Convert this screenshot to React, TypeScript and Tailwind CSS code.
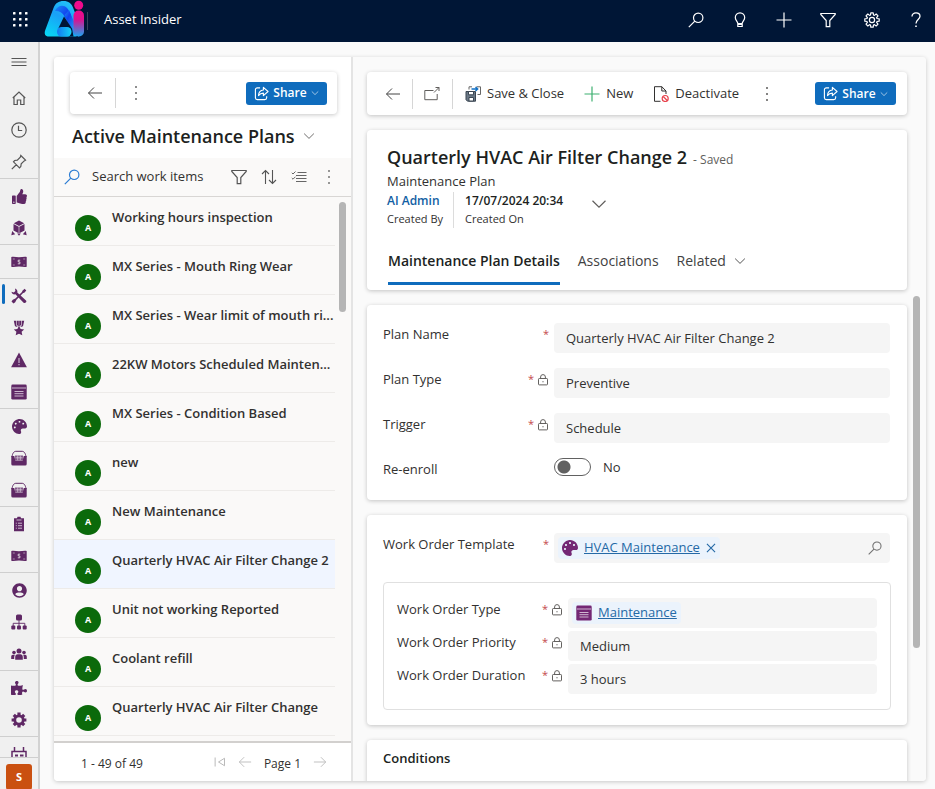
import { useState } from 'react';
import type { ReactNode } from 'react';
import { FaPuzzlePiece, FaThumbsUp, FaUserCircle, FaPalette } from 'react-icons/fa';

interface IconProps {
  className?: string;
}

// thin outline icons, 16px grid
function Outline({ className = 'size-4', children }: IconProps & { children: ReactNode }) {
  return (
    <svg viewBox="0 0 16 16" className={className} fill="none" stroke="currentColor" aria-hidden="true">
      {children}
    </svg>
  );
}

function Solid({ className = 'size-4', children }: IconProps & { children: ReactNode }) {
  return (
    <svg viewBox="0 0 16 16" className={className} fill="currentColor" aria-hidden="true">
      {children}
    </svg>
  );
}

const MenuIcon = () => (
  <Outline><path d="M.5 4.500h15M.5 8h15M.5 11.500h15" /></Outline>
);
const HomeIcon = () => (
  <Outline><path d="M1.800 8 8 2l6.200 6M3 7v7.500h3.300V10h3.400v4.500H13V7" strokeWidth="1.200" /></Outline>
);
const ClockIcon = () => (
  <Outline><circle cx="8" cy="8" r="7.200" strokeWidth="1.200" /><path d="M7.500 3.800v4.700h3.700" strokeWidth="1.200" /></Outline>
);
const PinIcon = () => (
  <Outline><path d="m9.800 1.500 4.700 4.700-1.300.7-3 3-.4 2.600-1.300 1.300-6-6L3.700 6.500l2.600-.4 3-3zM5.500 10.500l-4.700 4.700" strokeWidth="1.200" /></Outline>
);
const SearchIcon = ({ className }: IconProps) => (
  <Outline className={className}><circle cx="10.200" cy="5.800" r="4.700" strokeWidth="1.200" /><path d="m6.800 9.200-6 6" strokeWidth="1.200" /></Outline>
);
const BulbIcon = () => (
  <Outline><path d="M5.800 11.500c0-2-2.500-3-2.500-6a4.700 4.700 0 0 1 9.400 0c0 3-2.500 4-2.500 6zM5.800 11.500v3h4.400v-3M5.800 12.500h4.400" strokeWidth="1.200" /></Outline>
);
const PlusIcon = () => (
  <Outline><path d="M8 .5v15M.5 8h15" strokeWidth="1.200" /></Outline>
);
const FilterIcon = ({ className }: IconProps) => (
  <Outline className={className}><path d="M.8 1.500h14.400v1L9.800 8.600v6H6.200v-6L.8 2.500z" strokeWidth="1.200" /></Outline>
);
const GearIcon = () => (
  <Outline>
    <circle cx="8" cy="8" r="2.600" strokeWidth="1.200" />
    <path
      d="m6.500 3 .3-2.200h2.400L9.500 3l.9.400 1.800-1.400L14 3.800l-1.400 1.800.4.900 2.200.3v2.400l-2.200.3-.4.900 1.400 1.800-1.800 1.800-1.800-1.400-.9.400-.3 2.200H6.800L6.500 13l-.9-.4L3.800 14 2 12.200l1.400-1.800-.4-.9-2.200-.3V6.800L3 6.500l.4-.9L2 3.800 3.800 2l1.800 1.400z"
      strokeWidth="1.200"
      strokeLinejoin="round"
    />
  </Outline>
);
const HelpIcon = () => (
  <Outline><path d="M4 4.500C4 2.300 5.600.9 8 .9s4 1.300 4 3.300c0 3.300-4 3.300-4 7.300" strokeWidth="1.300" /><path d="M8 13.500V15" strokeWidth="1.600" /></Outline>
);
const BackIcon = ({ className }: IconProps) => (
  <Outline className={className}><path d="M15 8H1.500M7 2.500 1.500 8 7 13.500" /></Outline>
);
const ForwardIcon = ({ className }: IconProps) => (
  <Outline className={className}><path d="M1 8h13.500M9 2.500 14.500 8 9 13.500" /></Outline>
);
const MoreIcon = () => (
  <Solid><path d="M7.200 1.200h1.600v1.600H7.200zM7.200 7.200h1.600v1.600H7.200zM7.200 13.200h1.600v1.600H7.200z" /></Solid>
);
const ChevronIcon = ({ className }: IconProps) => (
  <Outline className={className}><path d="m1.500 4.800 6.500 6.400 6.500-6.400" strokeWidth="1.200" /></Outline>
);
const ShareIcon = () => (
  <Outline className="size-[15px]">
    <path d="M6.500 2H3.500A2 2 0 0 0 1.500 4v8.500a2 2 0 0 0 2 2h8a2 2 0 0 0 2-2V11" strokeWidth="1.200" />
    <path d="M10 1.500v2.700C6.500 4.500 5 6.800 4.800 10.200 6.200 8.300 7.800 7.600 10 7.600v2.700l5-4.400z" strokeWidth="1.200" strokeLinejoin="round" />
  </Outline>
);
const SortIcon = () => (
  <Outline><path d="M4.500 15V1.500M1 5l3.500-3.500L8 5M11.500 1v13.500M8 11l3.500 3.500L15 11" strokeWidth="1.100" /></Outline>
);
const ChecklistIcon = () => (
  <Outline><path d="M6.500 3.500h9M5 6.500h10.500M5 9.500h10.500M5 12.500h10.500M.8 3.800l1.200 1.200L4.500 2.500M.8 9l1.200 1.200 2.500-2.500" strokeWidth=".9" /></Outline>
);
const PopOutIcon = () => (
  <Outline><path d="M9.500 4.500H.8v9.200h12.400V8M10 6.500l5-5M11.500 1.500h3.500V5" strokeWidth="1" /></Outline>
);
const SaveCloseIcon = () => (
  <Outline>
    <path d="M1 5.500h9.500v9.700H2.500L1 13.700z" fill="#6b7886" stroke="#3b4652" />
    <path d="M3.500 5.500h5v3.300h-5zM4 11.500h4.500v3.500H4z" fill="#fff" stroke="#3b4652" />
    <path d="M4 3.500V.8h3M11.500.8h4v7.700h-3" stroke="#666" />
    <path d="M6.500 3h6M10.500 1l2.200 2-2.200 2" stroke="#1270c4" strokeWidth="1.400" />
  </Outline>
);
const DeactivateIcon = () => (
  <Outline>
    <path d="M7.500 15.300H1.500V.7h7.300L13 5v3M8.800.7V5H13" />
    <g stroke="#e8434d" strokeWidth="1.200">
      <circle cx="12.200" cy="12.500" r="3" />
      <path d="m10.200 10.500 4 4" />
    </g>
  </Outline>
);
const LockIcon = () => (
  <Outline className="size-3 text-[#605e5c]">
    <rect x="2" y="6" width="12" height="8.500" rx="1" strokeWidth="1.300" />
    <path d="M4.800 6V4a3.200 3.200 0 0 1 6.400 0v2" strokeWidth="1.300" />
    <path d="M7.200 9.500h1.600v1.600H7.200z" fill="currentColor" stroke="none" />
  </Outline>
);
const FirstPageIcon = () => (
  <Outline className="size-3"><path d="M1.500 2v12M14 3v10L6 8z" strokeWidth="1.300" /></Outline>
);
const CloseIcon = () => (
  <Outline className="size-2.5"><path d="m1.500 1.500 13 13M14.500 1.500l-13 13" strokeWidth="1.800" /></Outline>
);

// entity icons of the site map
const CubeIcon = () => (
  <Solid>
    <path d="M8 .6 13.200 3.200 8 5.900 2.800 3.200zM2.500 4l5.200 2.700v6.500L2.500 10.500zM13.500 4 8.300 6.700v6.500l5.200-2.700z" />
    <path d="M.3 15.200 1.200 11l3 3.200zM15.700 15.200 14.800 11l-3 3.200zM6.200 13.500h3.600L8 15.700z" />
  </Solid>
);
const MoneyIcon = () => (
  <Solid>
    <path d="M.3 3c2.500-.8 5 .3 7.700.3s5.200-.8 7.700-.3v9.800c-2.500.6-5-.4-7.700-.4s-5.200 1-7.700.3z" />
    <g fill="none" stroke="#f0f0f0">
      <path d="M9.200 6.200H7.200v1.700h1.700v1.900H6.800" strokeWidth=".8" />
      <path d="M1.800 5h2M12.200 5h2M1.800 11h2M12.200 11h2" strokeWidth=".5" />
    </g>
  </Solid>
);
const ToolsIcon = () => (
  <Solid>
    <path d="M13.600.8 15.300 2.500l-2 2.200-1.200.3L5.500 11.700l-1.300 2.600L2.500 15.500.5 13.500l1.300-1.700 2.600-1.300L11 3.900l.4-1.200z" />
    <path d="M4 .4c1.800.5 2.700 2.200 2.300 4l8.700 8c1.300 1.400-1 3.500-2.400 2.300L4.400 6.300C2.500 6.800.8 5.800.4 3.800l2.400.7 1.600-1.600z" />
  </Solid>
);
const MedalIcon = () => (
  <Solid>
    <path d="M2.800.8h2.500v4.500l1.500 1.700L4 6.300zM5.900.8h1.900v5.700L5.900 5zM8.200.8h1.900V5L8.200 6.500zM10.700.8h2.500L12 6.300l-2.800.7 1.500-1.700z" />
    <path d="m8 5.800 1.600 3.200 3.600.4-2.600 2.300.7 3.600L8 13.700l-3.300 1.600.7-3.600-2.600-2.300 3.600-.4z" />
  </Solid>
);
const WarningIcon = () => (
  <Solid><path d="M8 .6 15.900 15.200H.1z" /><path d="M8 6v5M8 12v1.300" stroke="#c9b6cc" strokeWidth="1.200" /></Solid>
);
const FormIcon = ({ className }: IconProps) => (
  <Solid className={className}>
    <rect x=".3" y=".6" width="15.400" height="15" rx="1.300" />
    <path d="M1 4h14M3.500 7.500h9M3.500 9.700h9M3.500 12h9" stroke="#e6dae8" strokeWidth=".8" />
  </Solid>
);
const BasketIcon = () => (
  <Solid>
    <path d="M1 7C1.500 3 3 1.300 5 1.300h6c2 0 3.500 1.700 4 5.700" fill="none" stroke="currentColor" />
    <path d="M.3 6h3l1 4.500h7.400l1-4.500h3v8a1.500 1.500 0 0 1-1.500 1.500H1.800A1.500 1.500 0 0 1 .3 14z" />
    <path d="M4 5.500h8v4.700H4z" opacity=".75" />
    <path d="M4.500 7.800h7M6.700 5.500v4.700M9.300 5.500v4.700" stroke="#e6dae8" strokeWidth=".6" />
  </Solid>
);
const ClipboardIcon = () => (
  <Solid>
    <path d="M3 2.200h3L6.500.8h3l.5 1.400h3v13H3z" />
    <path d="M5.500 4h5M4.800 7.200h1M7 7.200h4M4.800 9.700h1M7 9.700h4M4.800 12.200h1M7 12.200h4" stroke="#e6dae8" strokeWidth=".8" />
  </Solid>
);
const HierarchyIcon = () => (
  <Solid>
    <rect x="5" y=".5" width="6" height="6" rx="1.500" />
    <path d="M8 6v6M2.200 12V9.300h11.600V12" fill="none" stroke="currentColor" strokeWidth=".9" />
    <rect x=".3" y="11.500" width="4" height="4" rx="1" />
    <rect x="6" y="11.500" width="4" height="4" rx="1" />
    <rect x="11.700" y="11.500" width="4" height="4" rx="1" />
  </Solid>
);
const TeamIcon = () => (
  <Solid>
    <circle cx="8" cy="5" r="2.500" />
    <circle cx="3" cy="6.500" r="1.800" />
    <circle cx="13" cy="6.500" r="1.800" />
    <path d="M4.200 13.700V11c0-1.800 1-2.800 2.500-2.800h2.600c1.500 0 2.500 1 2.500 2.800v2.700zM.2 12.900v-2.200c0-1.200.7-2 1.800-2h2c-.8.900-.8 2.500-.8 4.200zM15.800 12.900v-2.200c0-1.200-.7-2-1.800-2h-2c.8.900.8 2.500.8 4.200z" />
  </Solid>
);
const SolidGearIcon = () => (
  <Outline>
    <circle cx="8" cy="8" r="4.200" strokeWidth="2.800" />
    <path d="M8 .6v3M8 12.400v3M.6 8h3M12.400 8h3M2.800 2.800l2 2M11.200 11.200l2 2M13.200 2.800l-2 2M4.800 11.200l-2 2" strokeWidth="3.200" />
  </Outline>
);
const RobotIcon = () => (
  <Outline>
    <path d="M3.500 1v4M12.500 1v4M1 15.500V5.500h14v10" strokeWidth="1.500" />
    <path d="M4 9.500h3M9 9.500h3.500M4 12.500h8" strokeWidth="2" />
  </Outline>
);

function Logo() {
  return (
    <svg viewBox="0 0 42 38" className="h-[38px] w-[42px]" aria-label="Asset Insider logo" role="img">
      <defs>
        <linearGradient id="leg" x1="0" y1="1" x2=".6" y2="0">
          <stop offset="0" stopColor="#06dcf5" />
          <stop offset=".6" stopColor="#1aa0f7" />
          <stop offset="1" stopColor="#22c3f7" />
        </linearGradient>
        <linearGradient id="arm" x1="0" y1="0" x2=".8" y2="1">
          <stop offset="0" stopColor="#1b8bf5" />
          <stop offset=".4" stopColor="#1040ee" />
          <stop offset="1" stopColor="#2098f5" />
        </linearGradient>
        <linearGradient id="foot" x1="0" y1="0" x2="1" y2="0">
          <stop offset="0" stopColor="#1478f2" />
          <stop offset="1" stopColor="#12d2f5" />
        </linearGradient>
        <linearGradient id="stem" x1="0" y1="0" x2="0" y2="1">
          <stop offset="0" stopColor="#ee0a8c" />
          <stop offset=".35" stopColor="#d9128f" />
          <stop offset="1" stopColor="#1ba4f2" />
        </linearGradient>
      </defs>
      <path d="M5 36.500c-4 0-5-3-3.800-6.300L9.500 8C11.500 3 14.500 1 19.500 1c5 0 8 2.500 9.500 6.500L39 33l-7 3.500z" fill="url(#leg)" />
      <path d="M11 11c2-5 8-7 12-3 2 2 3 5 4 8l8 20.500-5-2L20 15.500c-1.500-3-5.500-5-9-4.500z" fill="url(#arm)" />
      <path d="M20 16.500 28 28.500l1.500 8H25l-10.500-8.500z" fill="#001636" />
      <path d="M20.500 15 30 31.500V22L25 10z" fill="url(#arm)" />
      <rect x="13" y="27" width="14.500" height="9.500" rx="4.500" fill="url(#foot)" />
      <rect x="29.500" y="10.500" width="10.500" height="26" rx="5" fill="url(#stem)" />
      <circle cx="34.700" cy="5.300" r="4.500" fill="#ee0a8c" />
    </svg>
  );
}

const navGroups: { label: string; icon: ReactNode; active?: boolean }[][] = [
  [
    { label: 'Approvals', icon: <FaThumbsUp size={15} /> },
    { label: 'Assets', icon: <CubeIcon /> },
  ],
  [{ label: 'Costs', icon: <MoneyIcon /> }],
  [
    { label: 'Maintenance Plans', icon: <ToolsIcon />, active: true },
    { label: 'Awards', icon: <MedalIcon /> },
    { label: 'Alerts', icon: <WarningIcon /> },
    { label: 'Work Order Types', icon: <FormIcon /> },
  ],
  [
    { label: 'Templates', icon: <FaPalette size={15} /> },
    { label: 'Inventory', icon: <BasketIcon /> },
    { label: 'Purchases', icon: <BasketIcon /> },
  ],
  [
    { label: 'Inspections', icon: <ClipboardIcon /> },
    { label: 'Budgets', icon: <MoneyIcon /> },
  ],
  [
    { label: 'Accounts', icon: <FaUserCircle size={15} /> },
    { label: 'Hierarchy', icon: <HierarchyIcon /> },
    { label: 'Teams', icon: <TeamIcon /> },
  ],
  [
    { label: 'Extensions', icon: <FaPuzzlePiece size={16} /> },
    { label: 'Settings', icon: <SolidGearIcon /> },
  ],
  [{ label: 'Assistant', icon: <RobotIcon /> }],
];

const plans = [
  'Working hours inspection',
  'MX Series - Mouth Ring Wear',
  'MX Series - Wear limit of mouth ri...',
  '22KW Motors Scheduled Mainten...',
  'MX Series - Condition Based',
  'new',
  'New Maintenance',
  'Quarterly HVAC Air Filter Change 2',
  'Unit not working Reported',
  'Coolant refill',
  'Quarterly HVAC Air Filter Change',
];

const headerActions = [
  { label: 'Search', icon: <SearchIcon /> },
  { label: 'Ideas', icon: <BulbIcon /> },
  { label: 'New', icon: <PlusIcon /> },
  { label: 'Filter', icon: <FilterIcon /> },
  { label: 'Settings', icon: <GearIcon /> },
  { label: 'Help', icon: <HelpIcon /> },
];

function ShareButton() {
  return (
    <button className="ml-auto flex h-[23px] w-[81px] items-center justify-center gap-1 rounded-[3px] bg-[#0f6cbd] text-[12px] font-[560] text-white">
      <ShareIcon />
      Share
      <ChevronIcon className="size-2" />
    </button>
  );
}

function Sidebar() {
  return (
    <nav className="flex w-10 shrink-0 flex-col overflow-hidden border-r-2 border-[#d2d2d2] bg-[#f0f0f0] text-[#555]">
      <button aria-label="Menu" className="flex h-10 shrink-0 items-center justify-center"><MenuIcon /></button>
      <a href="#home" aria-label="Home" className="flex h-8 shrink-0 items-center justify-center"><HomeIcon /></a>
      <a href="#recent" aria-label="Recent" className="flex h-8 shrink-0 items-center justify-center"><ClockIcon /></a>
      <a href="#pinned" aria-label="Pinned" className="flex h-8 shrink-0 items-center justify-center"><PinIcon /></a>
      <div className="min-h-0 flex-1 overflow-hidden text-[#5f2865]">
        {navGroups.map((group, i) => (
          <div key={i} className="border-t border-[#cfcfcf] pt-px">
            {group.map((item) => (
              <a
                key={item.label}
                href="#nav"
                aria-label={item.label}
                className="relative flex h-8 items-center justify-center"
              >
                {item.active && <span className="absolute top-1 left-0.5 h-5 w-[3px] rounded-sm bg-[#0f6cbd]" />}
                {item.icon}
              </a>
            ))}
          </div>
        ))}
      </div>
      <div className="flex h-8 shrink-0 justify-center overflow-hidden border-t border-[#cfcfcf] pt-1.5">
        <button className="size-[26px] shrink-0 rounded-[3px] bg-[#ca5010] text-[11px] font-bold text-white">S</button>
      </div>
    </nav>
  );
}

function PlanList() {
  const [selected, setSelected] = useState(7);

  return (
    <section className="flex w-[299px] shrink-0 flex-col border-r-2 border-[#e4e4e4] bg-white">
      <div className="mt-[15px] mr-3.5 ml-4 flex h-[42px] items-center rounded bg-white pr-2.5 pl-[17px] text-[#444] shadow-[0_1px_4px_rgba(0,0,0,0.22)]">
        <button aria-label="Back"><BackIcon /></button>
        <span className="mx-3 h-[30px] w-px bg-[#d6d6d6]" />
        <button aria-label="More commands"><MoreIcon /></button>
        <ShareButton />
      </div>
      <button className="flex h-11 items-center gap-2 pl-[18px] text-[18px] font-[560] text-[#201f1e]">
        Active Maintenance Plans
        <ChevronIcon className="size-3 text-[#605e5c]" />
      </button>
      <div className="flex h-[39px] items-center border-b border-[#d8d6d4] bg-[#faf9f8] pr-3.5 pl-2.5 text-[#555]">
        <SearchIcon className="size-4 shrink-0 text-[#2b7cd3]" />
        <input
          aria-label="Search work items"
          placeholder="Search work items"
          className="ml-3 min-w-0 flex-1 text-[13px] outline-none placeholder:text-[#323130]"
        />
        <div className="flex items-center gap-3.5">
          <button aria-label="Filter"><FilterIcon /></button>
          <button aria-label="Sort"><SortIcon /></button>
          <button aria-label="Select"><ChecklistIcon /></button>
          <button aria-label="More"><MoreIcon /></button>
        </div>
      </div>
      <div className="flex min-h-0 flex-1 bg-[#faf9f8]">
        <ul className="min-w-0 flex-1 overflow-hidden">
          {plans.map((plan, i) => (
            <li key={plan}>
              <button
                onClick={() => setSelected(i)}
                className={`flex h-[49px] w-full border-b border-[#edebe9] pl-[21px] text-left ${i === selected ? 'bg-[#f0f5ff]' : ''}`}
              >
                <span className="mt-[18px] flex size-[26px] shrink-0 items-center justify-center rounded-full bg-[#0b6a0b] text-[9px] font-bold text-white">
                  A
                </span>
                <span className="mt-2.5 ml-[11px] text-[13px] leading-5 font-[560] whitespace-nowrap text-[#323130]">{plan}</span>
              </button>
            </li>
          ))}
        </ul>
        <div className="w-4 shrink-0 pt-[5px] pl-1">
          <div className="h-[110px] w-[7px] rounded-full bg-[#b5b5b5]" />
        </div>
      </div>
      <div className="flex h-10 items-center border-t-2 border-[#d2d0ce] pt-1 pr-6 pl-[27px] text-[12px] text-[#323130]">
        <span className="flex-1">1 - 49 of 49</span>
        <div className="flex items-center gap-3 text-[#b8b8b8]">
          <button aria-label="First page" className="mb-1"><FirstPageIcon /></button>
          <button aria-label="Previous page" className="mb-1"><BackIcon className="size-3.5" /></button>
          <span className="text-[#323130]">Page 1</span>
          <button aria-label="Next page" className="mb-1"><ForwardIcon className="size-3.5" /></button>
        </div>
      </div>
    </section>
  );
}

interface FieldProps {
  id: string;
  label: string;
  locked?: boolean;
  required?: boolean;
  children: ReactNode;
}

function Field({ id, label, locked, required = true, children }: FieldProps) {
  return (
    <div className="flex">
      <div className="flex h-6 w-[171px] shrink-0 items-center gap-[3px] pr-[5px] text-[13px]">
        <label htmlFor={id} className="flex-1 text-[#323130]">{label}</label>
        {required && <span className="pb-0.5 text-[11px] text-[#c4494c]">*</span>}
        {locked && <LockIcon />}
      </div>
      {children}
    </div>
  );
}

function TextField({ id, label, value, locked }: { id: string; label: string; value: string; locked?: boolean }) {
  return (
    <Field id={id} label={label} locked={locked}>
      <input
        id={id}
        defaultValue={value}
        readOnly={locked}
        className="h-[30px] min-w-0 flex-1 rounded bg-[#f5f5f5] px-3 text-[13px] text-[#323130] outline-none"
      />
    </Field>
  );
}

const card = 'mr-[19px] ml-3.5 shrink-0 rounded bg-white shadow-[0_1px_4px_rgba(0,0,0,0.22)]';

function CommandBar() {
  return (
    <div className={`${card} mt-[15px] flex h-[43px] items-center pr-[11px] pl-[18px] text-[13px] text-[#323130]`}>
      <button aria-label="Back" className="text-[#444]"><BackIcon /></button>
      <span className="mx-[11px] h-[30px] w-px bg-[#d6d6d6]" />
      <button aria-label="Open in new window" className="text-[#605e5c]"><PopOutIcon /></button>
      <span className="mx-3 h-[30px] w-px bg-[#d6d6d6]" />
      <button className="flex items-center gap-1.5"><SaveCloseIcon />Save &amp; Close</button>
      <button className="ml-5 flex items-center gap-1.5"><span className="text-[#3db070]"><PlusIcon /></span>New</button>
      <button className="ml-5 flex items-center gap-1.5"><DeactivateIcon />Deactivate</button>
      <button aria-label="More commands" className="ml-5"><MoreIcon /></button>
      <ShareButton />
    </div>
  );
}

function PlanDetail() {
  const [reenroll, setReenroll] = useState(false);

  return (
    <section className="flex min-w-0 flex-1 flex-col bg-[#fafafa]">
      <CommandBar />
      <header className={`${card} mt-[15px] h-40 pt-3.5 pl-5`}>
        <div className="flex items-baseline gap-1.5">
          <h1 className="text-[18px] leading-[26px] font-[560] text-[#201f1e]">Quarterly HVAC Air Filter Change 2</h1>
          <span className="text-[12px] text-[#605e5c]">- Saved</span>
        </div>
        <p className="text-[13px] leading-[22px] text-[#323130]">Maintenance Plan</p>
        <div className="flex text-[12px] leading-[18px] text-[#323130]">
          <div className="border-r border-[#dcdcdc] pr-2.5">
            <a href="#admin" className="block font-semibold text-[#115ea3]">AI Admin</a>
            <span className="text-[11px]">Created By</span>
          </div>
          <div className="pl-[11px]">
            <p className="font-semibold text-[#201f1e]">17/07/2024 20:34</p>
            <span className="text-[11px]">Created On</span>
          </div>
          <button aria-label="Expand header" className="mb-3 ml-7 text-[#605e5c]"><ChevronIcon /></button>
        </div>
        <div role="tablist" className="mt-5 flex items-start gap-[18px] pl-px text-[14px] leading-[26px] text-[#424242]">
          <button role="tab" aria-selected="true" className="h-[37px] border-b-[3px] border-[#0f6cbd] pb-2 font-semibold text-[#201f1e]">
            Maintenance Plan Details
          </button>
          <button role="tab" aria-selected="false">Associations</button>
          <button role="tab" aria-selected="false" className="flex items-center gap-2">
            Related <ChevronIcon className="size-3" />
          </button>
        </div>
      </header>
      <div className="flex min-h-0 flex-1 flex-col overflow-hidden">
        <div className={`${card} mt-[15px] flex flex-col gap-[15px] pt-[18px] pr-[17px] pb-[18px] pl-4`}>
          <TextField id="name" label="Plan Name" value="Quarterly HVAC Air Filter Change 2" />
          <TextField id="type" label="Plan Type" value="Preventive" locked />
          <TextField id="trigger" label="Trigger" value="Schedule" locked />
          <Field id="reenroll" label="Re-enroll" required={false}>
            <input
              id="reenroll"
              type="checkbox"
              role="switch"
              checked={reenroll}
              onChange={(e) => setReenroll(e.target.checked)}
              className="h-[18px] w-[37px] appearance-none rounded-full border border-[#616161] bg-white bg-[radial-gradient(circle_at_9px_8px,#616161_6px,transparent_7px)] checked:bg-[radial-gradient(circle_at_26px_8px,#616161_6px,transparent_7px)]"
            />
            <span className="ml-3 text-[13px] text-[#323130]">{reenroll ? 'Yes' : 'No'}</span>
          </Field>
        </div>
        <div className={`${card} mt-[15px] pt-[18px] pr-4 pb-[15px] pl-4`}>
          <Field id="template" label="Work Order Template">
            <div className="mr-px flex h-[30px] min-w-0 flex-1 items-center rounded bg-[#f5f5f5] px-1">
              <div className="flex h-[22px] items-center gap-1.5 rounded bg-[#ebf3fc] px-1 text-[13px]">
                <FaPalette size={16} className="text-[#742774]" />
                <a href="#template" className="text-[#2469a6] underline">HVAC Maintenance</a>
                <button aria-label="Remove" className="text-[#2469a6]"><CloseIcon /></button>
              </div>
              <input id="template" className="min-w-0 flex-1 outline-none" />
              <button aria-label="Look up" className="mr-1 text-[#707070]"><SearchIcon className="size-3.5" /></button>
            </div>
          </Field>
          <div className="mt-[19px] flex flex-col gap-[3px] rounded border border-[#e0e0e0] px-[13px] py-[15px]">
            <Field id="wotype" label="Work Order Type" locked>
              <div className="flex h-[30px] min-w-0 flex-1 items-center rounded bg-[#f5f5f5] px-1">
                <div className="flex h-[22px] items-center gap-1.5 rounded bg-[#ebf3fc] px-1 text-[13px]">
                  <FormIcon className="size-4 text-[#742774]" />
                  <a href="#type" className="text-[#2469a6] underline">Maintenance</a>
                </div>
                <input id="wotype" readOnly className="min-w-0 flex-1 outline-none" />
              </div>
            </Field>
            <TextField id="priority" label="Work Order Priority" value="Medium" locked />
            <TextField id="duration" label="Work Order Duration" value="3 hours" locked />
          </div>
        </div>
        <div className={`${card} mt-[15px] h-40 pt-2 pl-4`}>
          <h2 className="text-[13px] leading-5 font-semibold text-[#201f1e]">Conditions</h2>
        </div>
      </div>
    </section>
  );
}

export default function App() {
  return (
    <div className="flex h-screen flex-col overflow-hidden bg-[#fafafa] font-['Open_Sans','Noto_Sans',sans-serif]">
      <header className="flex h-[42px] shrink-0 items-center bg-[#001636] pr-[11px] text-white">
        <button aria-label="App launcher" className="mb-1 ml-3">
          <Solid>
            {[1, 7, 13].map((y) => [1, 7, 13].map((x) => <rect key={`${x}-${y}`} x={x} y={y} width="2.500" height="2.500" rx=".6" />))}
          </Solid>
        </button>
        <div className="mb-1 ml-4"><Logo /></div>
        <span className="ml-px h-[18px] w-px bg-[#33435c]" />
        <span className="mb-0.5 ml-4 text-[13px]">Asset Insider</span>
        <div className="mb-0.5 ml-auto flex gap-7">
          {headerActions.map((action) => (
            <button key={action.label} aria-label={action.label}>{action.icon}</button>
          ))}
        </div>
      </header>
      <div className="flex min-h-0 flex-1">
        <Sidebar />
        <main className="relative mt-[15px] mr-[9px] mb-2 ml-3.5 flex min-w-0 flex-1 overflow-clip rounded shadow-[0_1px_4px_rgba(0,0,0,0.2)]">
          <PlanList />
          <PlanDetail />
          <div className="absolute top-[239px] right-1.5 h-[352px] w-[7px] rounded-full bg-[#b5b5b5]" />
        </main>
      </div>
    </div>
  );
}
